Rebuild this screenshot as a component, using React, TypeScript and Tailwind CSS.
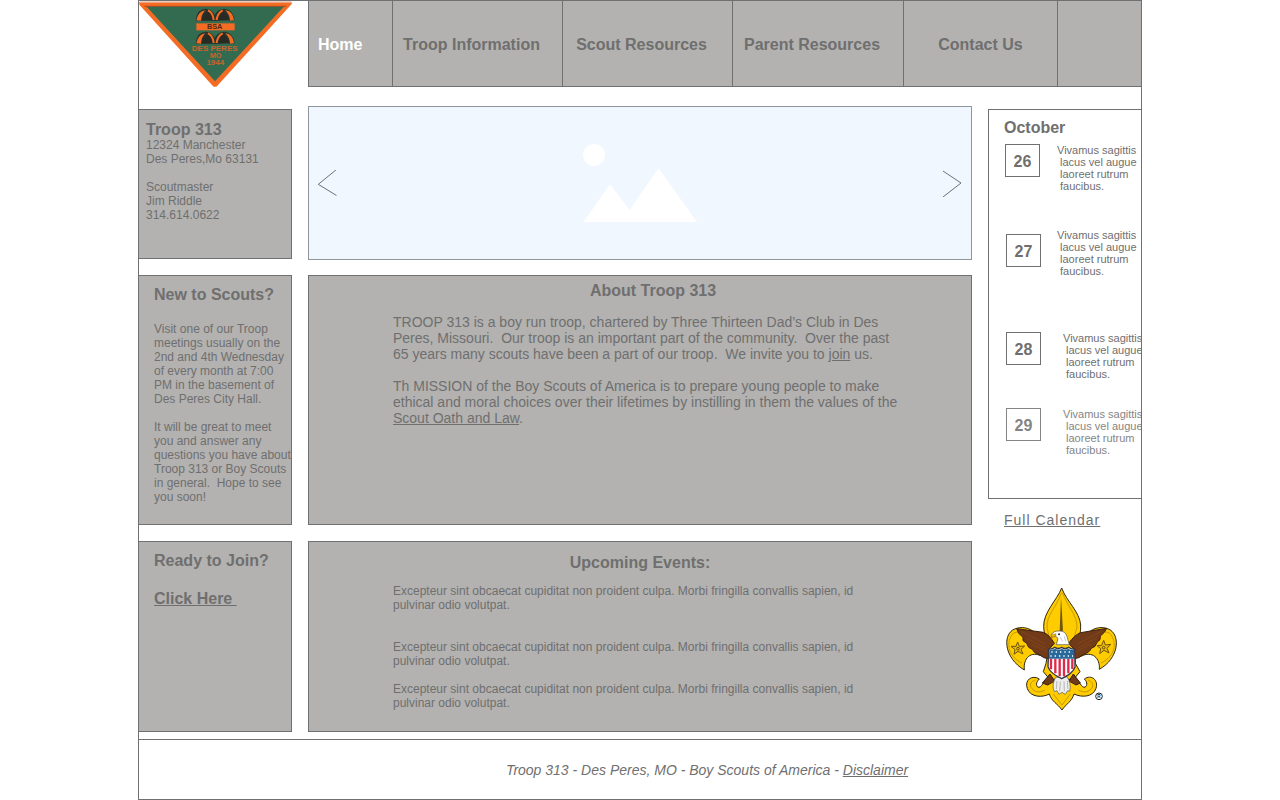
import React from "react";

const navItems = [
  { label: "Home", cell: "justify-start pl-[9px] text-white" },
  { label: "Troop Information", cell: "justify-center pr-3" },
  { label: "Scout Resources", cell: "justify-center pr-3" },
  { label: "Parent Resources", cell: "justify-center pr-3" },
  { label: "Contact Us", cell: "justify-center" },
];

const days = [
  { day: 26, row: "mt-1.5", box: "", text: "ml-[17px]" },
  { day: 27, row: "mt-[37px]", box: "ml-px mt-[5px]", text: "ml-4" },
  { day: 28, row: "mt-[55px]", box: "ml-px", text: "ml-[22px]" },
  { day: 29, row: "mt-7 opacity-85", box: "ml-px", text: "ml-[22px]" },
];

const events = ["", "mt-7", "mt-3.5"];

function Heading({ children, className = "" }: { children: React.ReactNode; className?: string }) {
  return <h2 className={`text-base leading-5 font-bold ${className}`}>{children}</h2>;
}

function TroopPatch() {
  return (
    <svg viewBox="27 3 459 258" className="block h-[86px] w-[153px]" role="img" aria-label="Des Peres troop patch">
      <path d="M28 6 L485 6 L485 12 L262 257 Q255 264 248 257 L28 14 Z" fill="#f46b24" />
      <path d="M30 6 H484" stroke="#e9b9a4" strokeWidth="4" />
      <path d="M44 19 H468" stroke="#a8481d" strokeWidth="3" />
      <path d="M50 20 L461 20 L255 244 Z" fill="#326b50" />
      {[0, 69].map((dy) => (
        <g key={dy} transform={`translate(0 ${dy})`}>
          <path d="M197 62 Q200 27 226 26 Q247 27 254 46 Q263 25 285 26 Q310 30 314 60 L298 63 L276 40 L260 63 L250 63 L236 38 L216 62 Z" fill="#27362c" />
          <path d="M199 61 Q204 34 226 31 Q214 42 213 62 Z M312 60 Q308 33 286 31 Q299 43 300 62 Z" fill="#f46b24" />
          <path d="M215 62 Q218 42 232 34 Q247 42 249 62 Z M261 62 Q264 40 279 34 Q294 43 297 61 Z" fill="#292a24" />
          <path d="M234 31 Q249 38 251 60 M278 31 Q262 40 260 60" fill="none" stroke="#f46b24" strokeWidth="6" />
        </g>
      ))}
      <rect x="199" y="70" width="115" height="21" fill="#f46b24" />
      <g fontFamily="Liberation Sans, sans-serif" fontWeight="700" textAnchor="middle">
        <text x="254" y="88" fontSize="22" fill="#4d2a1a">BSA</text>
        <g fill="#c7652f">
          <text x="254" y="152" fontSize="24">DES PERES</text>
          <text x="257" y="174" fontSize="22">MO</text>
          <text x="256" y="195" fontSize="24">1944</text>
        </g>
      </g>
    </svg>
  );
}

function ScoutEmblem() {
  return (
    <svg viewBox="45 18 336 378" className="block h-[126px] w-[112px]" role="img" aria-label="Boy Scouts of America emblem">
      <g fill="#fc0" stroke="#30270c" strokeWidth="3" strokeLinejoin="round">
        <path d="M215 24 C200 62 160 96 161 140 Q162 165 176 205 L168 250 L160 275 L185 305 L245 305 L270 275 L256 250 L255 205 Q274 165 272 135 C269 95 230 65 215 24 Z" />
        <path d="M168 224 C154 150 104 130 68 150 C38 170 44 235 103 270 C99 235 122 211 157 229 Z" />
        <path d="M262 224 C276 150 326 130 361 150 C391 170 386 235 328 268 C331 235 307 211 273 229 Z" />
        <path d="M180 298 C161 294 159 320 147 322 C137 321 137 306 148 297 C127 283 102 300 112 326 C122 353 158 353 178 342 C185 365 203 371 216 390 C229 371 245 365 252 342 C275 353 309 352 318 325 C326 300 304 282 283 297 C294 307 292 321 282 322 C270 319 267 294 249 298 Z" />
      </g>
      <g fill="none" stroke="#b99108" strokeWidth="2.5">
        <path d="M214 38 C202 78 169 105 171 142 L181 187 M217 38 C233 80 262 105 261 142 L248 187" />
        <path d="M96 249 C52 229 47 184 70 160 Q86 151 110 160 M333 249 C378 229 382 184 359 160 Q345 151 322 160" />
        <path d="M137 299 Q116 307 123 322 Q136 344 164 331 M293 299 Q313 307 307 322 Q294 344 266 331 M190 342 L216 375 L241 342" />
      </g>
      <path d="M213 50 L209 155 H219 Z" fill="#6f560b" />
      <g fill="#e9b907" stroke="#6d5410" strokeWidth="3">
        <path d="M83 186 L88 199 L104 198 L93 208 L99 222 L84 214 L72 223 L75 209 L63 199 L78 199 Z" />
        <path d="M341 181 L346 195 L362 193 L351 205 L357 219 L342 211 L329 221 L332 206 L321 197 L335 196 Z" />
        <circle cx="84" cy="206" r="4" />
        <circle cx="341" cy="203" r="4" />
      </g>
      <g fill="#713a18" stroke="#38200f" strokeWidth="3" strokeLinejoin="round">
        <path d="M80 146 L160 157 Q178 164 193 190 L177 208 L176 236 Q158 235 152 226 L143 223 Q131 218 127 208 L116 202 L110 190 L99 182 L99 172 L86 160 Z" />
        <path d="M350 145 L272 158 Q254 164 236 190 L252 208 L252 236 Q270 235 277 225 L289 220 Q300 215 304 205 L315 199 L321 187 L330 179 L331 168 L343 157 Z" />
        <path d="M180 282 L157 309 L173 315 L194 303 Z M250 282 L271 309 L258 315 L237 303 Z" />
      </g>
      <path d="M95 155 L166 192 M110 174 L166 204 M125 193 L170 215 M335 154 L262 192 M320 173 L264 204 M304 192 L258 215" stroke="#8a4a20" strokeWidth="2" />
      <path d="M184 164 Q191 151 210 153 Q226 153 231 170 L238 194 H199 L204 175 L197 169 L184 171 Z" fill="#fff" stroke="#504d46" strokeWidth="2" />
      <path d="M184 164 L198 161 L198 168 L184 173 Z" fill="#eab111" stroke="#5f4a17" />
      <circle cx="207" cy="163" r="3" fill="#222" />
      <path d="M210 171 L218 184 M223 169 L227 184" stroke="#aaa" strokeWidth="2" />
      <path d="M197 292 Q184 315 193 335 L201 332 L207 343 L216 337 L226 343 L233 332 L239 334 Q245 311 231 290 Z" fill="#eee" stroke="#555" strokeWidth="2" />
      <path d="M201 303 L199 327 M211 305 L209 334 M222 304 L223 334 M232 303 L234 327" stroke="#999" strokeWidth="2" />
      <path d="M176 207 Q188 208 194 202 Q206 209 215 202 Q225 209 236 202 Q243 208 254 207 L255 261 Q249 280 215 296 Q180 280 174 260 Z" fill="#fff" stroke="#343848" strokeWidth="4" />
      <path d="M183 236 V268 M196 236 V280 M209 236 V289 M222 236 V289 M235 236 V280 M247 236 V267" stroke="#df294a" strokeWidth="7" />
      <path d="M178 209 Q190 210 195 206 Q207 211 215 206 Q226 211 235 206 Q244 211 252 209 V236 H177 Z" fill="#28699a" />
      <path d="M184 216 H249 M181 228 H249" stroke="#fff" strokeWidth="4" strokeDasharray="4 9" />
      <circle cx="327" cy="349" r="10" fill="#fff" stroke="#222" strokeWidth="3" />
      <text x="327" y="354" textAnchor="middle" fontFamily="Liberation Sans, sans-serif" fontSize="14" fontWeight="700" fill="#222">R</text>
    </svg>
  );
}

export default function App() {
  return (
    <div className="mx-auto max-w-[1004px] border border-[#6f7071] bg-white font-['Liberation_Sans',Arial,sans-serif] text-[#6f6f6f]">
      <header className="flex gap-4">
        <a href="#home" className="w-[153px] shrink-0" aria-label="Troop 313 home">
          <TroopPatch />
        </a>
        <nav className="grid flex-1 grid-cols-[84px_170px_170px_171px_154px_1fr] border-b border-l border-[#6f7071] bg-[#b3b2b0] text-base font-bold">
          {navItems.map(({ label, cell }) => (
            <a
              key={label}
              href={`#${label.toLowerCase().replace(" ", "-")}`}
              className={`flex items-center border-r border-[#6f7071] pt-0.5 whitespace-nowrap ${cell}`}
            >
              {label}
            </a>
          ))}
        </nav>
      </header>

      <main className="flex gap-4 pb-[7px]">
        <aside className="flex w-[153px] shrink-0 flex-col gap-4 pt-[22px] text-xs leading-[14px] whitespace-nowrap">
          <section className="min-h-[150px] border-y border-r border-[#6f7071] bg-[#b3b2b0] pt-2.5 pl-[7px]">
            <Heading>Troop 313</Heading>
            <address className="-mt-0.5 not-italic">
              12324 Manchester<br />
              Des Peres,Mo 63131<br />
              <br />
              Scoutmaster<br />
              Jim Riddle<br />
              314.614.0622
            </address>
          </section>
          <section className="min-h-[250px] border-y border-r border-[#6f7071] bg-[#b3b2b0] pt-[9px] pl-[15px]">
            <Heading>New to Scouts?</Heading>
            <p className="mt-[17px]">
              Visit one of our Troop<br />
              meetings usually on the<br />
              2nd and 4th Wednesday<br />
              of every month at 7:00<br />
              PM in the basement of<br />
              Des Peres City Hall.
            </p>
            <p className="mt-3.5">
              It will be great to meet<br />
              you and answer any<br />
              questions you have about<br />
              Troop 313 or Boy Scouts<br />
              in general.&nbsp; Hope to see<br />
              you soon!
            </p>
          </section>
          <section className="flex-1 border-y border-r border-[#6f7071] bg-[#b3b2b0] pt-[9px] pl-[15px]">
            <Heading>Ready to Join?</Heading>
            <a href="#join" className="mt-[18px] block text-base leading-5 font-bold underline">
              Click Here&nbsp;
            </a>
          </section>
        </aside>

        <div className="flex min-w-0 flex-1 flex-col pt-[19px]">
          <section aria-label="Photos" className="flex h-[154px] items-center justify-between border border-[#8f969c] bg-[#f0f7fe] px-[9px]">
            <button type="button" aria-label="Previous photo">
              <svg width="19" height="27" viewBox="0 0 19 27" fill="none" stroke="#6f7071" className="block">
                <path d="M18.5 -0.5 L0.3 14.3 L18.5 25.5" />
              </svg>
            </button>
            <svg width="114" height="80" viewBox="0 0 114 80" fill="#fff" aria-hidden="true">
              <circle cx="11" cy="12" r="11" />
              <path d="M0.5 79 L27 41 L46.5 67 L75.5 25 L114 79 Z" />
            </svg>
            <button type="button" aria-label="Next photo">
              <svg width="19" height="27" viewBox="0 0 19 27" fill="none" stroke="#6f7071" className="block">
                <path d="M0 1 L18 13 L0 27" />
              </svg>
            </button>
          </section>

          <section className="mt-[15px] min-h-[250px] border border-[#6f7071] bg-[#b3b2b0] pt-[5px] pl-[84px]">
            <div className="max-w-[520px] text-sm leading-4">
              <Heading className="text-center">About Troop 313</Heading>
              <p className="mt-[13px]">
                TROOP 313 is a boy run troop, chartered by Three Thirteen Dad’s Club in Des<br />
                Peres, Missouri.&nbsp; Our troop is an important part of the community.&nbsp; Over the past<br />
                65 years many scouts have been a part of our troop.&nbsp; We invite you to{" "}
                <a href="#join" className="underline">join</a> us.
              </p>
              <p className="mt-4">
                Th MISSION of the Boy Scouts of America is to prepare young people to make<br />
                ethical and moral choices over their lifetimes by instilling in them the values of the<br />
                <a href="#oath" className="underline">Scout Oath and Law</a>.
              </p>
            </div>
          </section>

          <section className="mt-4 min-h-[191px] border border-[#6f7071] bg-[#b3b2b0] pt-[11px]">
            <Heading className="text-center">Upcoming Events:</Heading>
            <div className="mt-[11px] ml-[84px] max-w-[490px] text-xs leading-[14px]">
              {events.map((spacing, i) => (
                <p key={i} className={spacing}>
                  Excepteur sint obcaecat cupiditat non proident culpa. Morbi fringilla convallis sapien, id<br />
                  pulvinar odio volutpat.
                </p>
              ))}
            </div>
          </section>
        </div>

        <aside className="w-[153px] shrink-0 pt-[22px]">
          <section className="min-h-[390px] overflow-hidden border-y border-l border-[#6f7071] pt-2 pl-[15px]">
            <Heading>October</Heading>
            {days.map(({ day, row, box, text }) => (
              <div key={day} className={`flex items-start pl-px ${row}`}>
                <time className={`flex h-[33px] w-[35px] shrink-0 items-center justify-center border border-[#6f7071] pt-0.5 text-base font-bold ${box}`}>
                  {day}
                </time>
                <p className={`text-[11px] leading-3 whitespace-pre ${text}`}>
                  {"Vivamus sagittis\n lacus vel augue\n laoreet rutrum\n faucibus."}
                </p>
              </div>
            ))}
          </section>
          <a href="#calendar" className="mt-[13px] ml-4 block w-fit text-sm leading-4 tracking-[1px] underline">
            Full Calendar
          </a>
          <div className="mt-[58px] ml-[17px]">
            <ScoutEmblem />
          </div>
        </aside>
      </main>

      <footer className="flex min-h-[60px] items-center justify-center border-t border-[#6f7071] pl-[134px] text-sm italic">
        <p>
          Troop 313 - Des Peres, MO - Boy Scouts of America -{" "}
          <a href="#disclaimer" className="underline">Disclaimer</a>
        </p>
      </footer>
    </div>
  );
}
